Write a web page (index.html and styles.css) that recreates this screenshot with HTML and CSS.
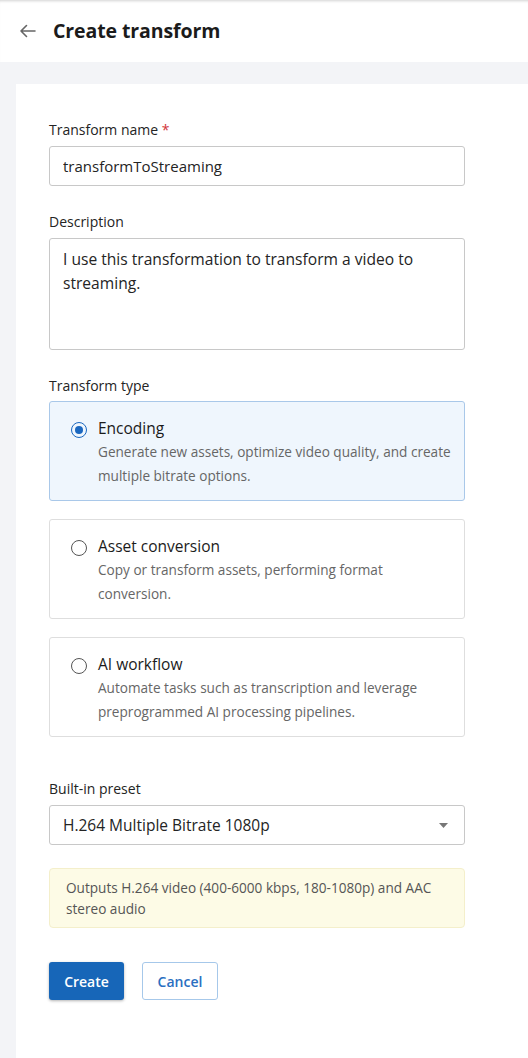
FILE: index.html
```html
<!DOCTYPE html>
<html lang="en">
<head>
  <meta charset="UTF-8" />
  <meta name="viewport" content="width=device-width, initial-scale=1.0"/>
  <title>Create transform</title>
  <link rel="stylesheet" href="styles.css">
</head>
<body>
  <header class="topbar">
    <button class="back" aria-label="Back">
      <svg width="17" height="14" viewBox="0 0 17 14"><path d="M16 7H2M7.5 1.5L2 7l5.5 5.5" fill="none" stroke="#666" stroke-width="1.6" stroke-linecap="round" stroke-linejoin="round"/></svg>
    </button>
    <h1>Create transform</h1>
  </header>

  <main class="page">
    <form class="panel">
      <label class="field-label" for="name">Transform name <span class="req">*</span></label>
      <input class="text-input" id="name" type="text" value="transformToStreaming" />

      <label class="field-label gap" for="desc">Description</label>
      <textarea class="text-area" id="desc">I use this transformation to transform a video to streaming.</textarea>

      <div class="field-label gap tight">Transform type</div>
      <div class="options">
        <label class="option selected">
          <span class="radio checked"></span>
          <span class="option-body">
            <span class="option-title">Encoding</span>
            <span class="option-desc">Generate new assets, optimize video quality, and create multiple bitrate options.</span>
          </span>
        </label>
        <label class="option">
          <span class="radio"></span>
          <span class="option-body">
            <span class="option-title">Asset conversion</span>
            <span class="option-desc">Copy or transform assets, performing format conversion.</span>
          </span>
        </label>
        <label class="option">
          <span class="radio"></span>
          <span class="option-body">
            <span class="option-title">AI workflow</span>
            <span class="option-desc">Automate tasks such as transcription and leverage preprogrammed AI processing pipelines.</span>
          </span>
        </label>
      </div>

      <label class="field-label gap-lg" for="preset">Built-in preset</label>
      <div class="select">
        <span>H.264 Multiple Bitrate 1080p</span>
        <svg width="9" height="5" viewBox="0 0 9 5"><path d="M0 0h9L4.5 5z" fill="#777"/></svg>
      </div>

      <div class="note">Outputs H.264 video (400-6000 kbps, 180-1080p) and AAC stereo audio</div>

      <div class="actions">
        <button type="button" class="btn primary">Create</button>
        <button type="button" class="btn secondary">Cancel</button>
      </div>
    </form>
  </main>
</body>
</html>
```

FILE: styles.css
```css
* {
  box-sizing: border-box;
}
html, body {
  margin: 0;
  height: 100%;
}
body {
  font-family: 'Open Sans', 'Noto Sans', sans-serif;
  color: #242424;
  background: #f3f4f7;
  display: flex;
  flex-direction: column;
}
.topbar {
  height: 62px;
  background: #fff;
  display: flex;
  align-items: center;
  padding-left: 19px;
  gap: 17px;
  box-shadow: inset 0 3px 3px -2px rgba(0, 0, 0, 0.18);
}
.back {
  border: none;
  background: none;
  padding: 0;
  display: flex;
}
.topbar h1 {
  margin: 0 0 2px;
  font-size: 19.5px;
  font-weight: 700;
  color: #1b1b1b;
  letter-spacing: -0.1px;
}
.page {
  flex: 1;
  padding: 22px 0 0 16px;
  display: flex;
}
.panel {
  flex: 1;
  background: #fff;
  padding: 36px 63px 40px 33px;
  display: flex;
  flex-direction: column;
}
.field-label {
  font-size: 14px;
  line-height: 20px;
  color: #242424;
  margin-bottom: 6px;
}
.field-label.gap {
  margin-top: 26px;
}
.field-label.tight {
  margin-bottom: 5px;
}
.field-label.gap-lg {
  margin-top: 42px;
}
.req {
  color: #d13438;
}
.text-input, .text-area, .select {
  width: 100%;
  border: 1px solid #c8c8c8;
  border-radius: 3px;
  font-family: inherit;
  font-size: 15px;
  color: #242424;
  background: #fff;
}
.text-input {
  height: 40px;
  padding: 0 13px;
}
.text-area {
  height: 112px;
  padding: 8px 13px;
  font-size: 15.6px;
  line-height: 24px;
  resize: none;
}
.options {
  display: flex;
  flex-direction: column;
  gap: 18px;
}
.option {
  display: flex;
  gap: 11px;
  border: 1px solid #dedede;
  border-radius: 3px;
  padding: 14px 10px 11px 21px;
  height: 100px;
}
.option.selected {
  background: #eff6fd;
  border-color: #a9c8e9;
}
.radio {
  width: 16px;
  height: 16px;
  border: 1.5px solid #555;
  border-radius: 50%;
  margin-top: 6px;
  flex-shrink: 0;
  display: flex;
  align-items: center;
  justify-content: center;
}
.radio.checked {
  border: 1.5px solid #1a67c0;
}
.radio.checked::after {
  content: "";
  width: 8px;
  height: 8px;
  border-radius: 50%;
  background: #1a67c0;
}
.option-body {
  display: flex;
  flex-direction: column;
}
.option-title {
  font-size: 15.5px;
  line-height: 24px;
  color: #1b1b1b;
}
.option-desc {
  font-size: 13.6px;
  line-height: 24px;
  color: #666;
}
.select {
  height: 40px;
  padding: 0 16px 0 13px;
  font-size: 15.5px;
  display: flex;
  align-items: center;
  justify-content: space-between;
}
.note {
  margin-top: 23px;
  background: #fdfbe6;
  border: 1px solid #f4efcb;
  border-radius: 4px;
  padding: 8px 16px;
  font-size: 13.6px;
  line-height: 21px;
  color: #555;
}
.actions {
  display: flex;
  gap: 18px;
  margin-top: 34px;
}
.btn {
  height: 38px;
  border-radius: 3px;
  font-family: inherit;
  font-size: 14px;
  font-weight: 600;
  padding: 0;
  width: 75px;
}
.primary {
  background: #1766b8;
  border: none;
  color: #fff;
  box-shadow: 0 1px 3px rgba(0, 0, 0, 0.3);
}
.secondary {
  width: 76px;
  background: #fff;
  border: 1.5px solid #a6c8ea;
  color: #2a6fc1;
}
```
